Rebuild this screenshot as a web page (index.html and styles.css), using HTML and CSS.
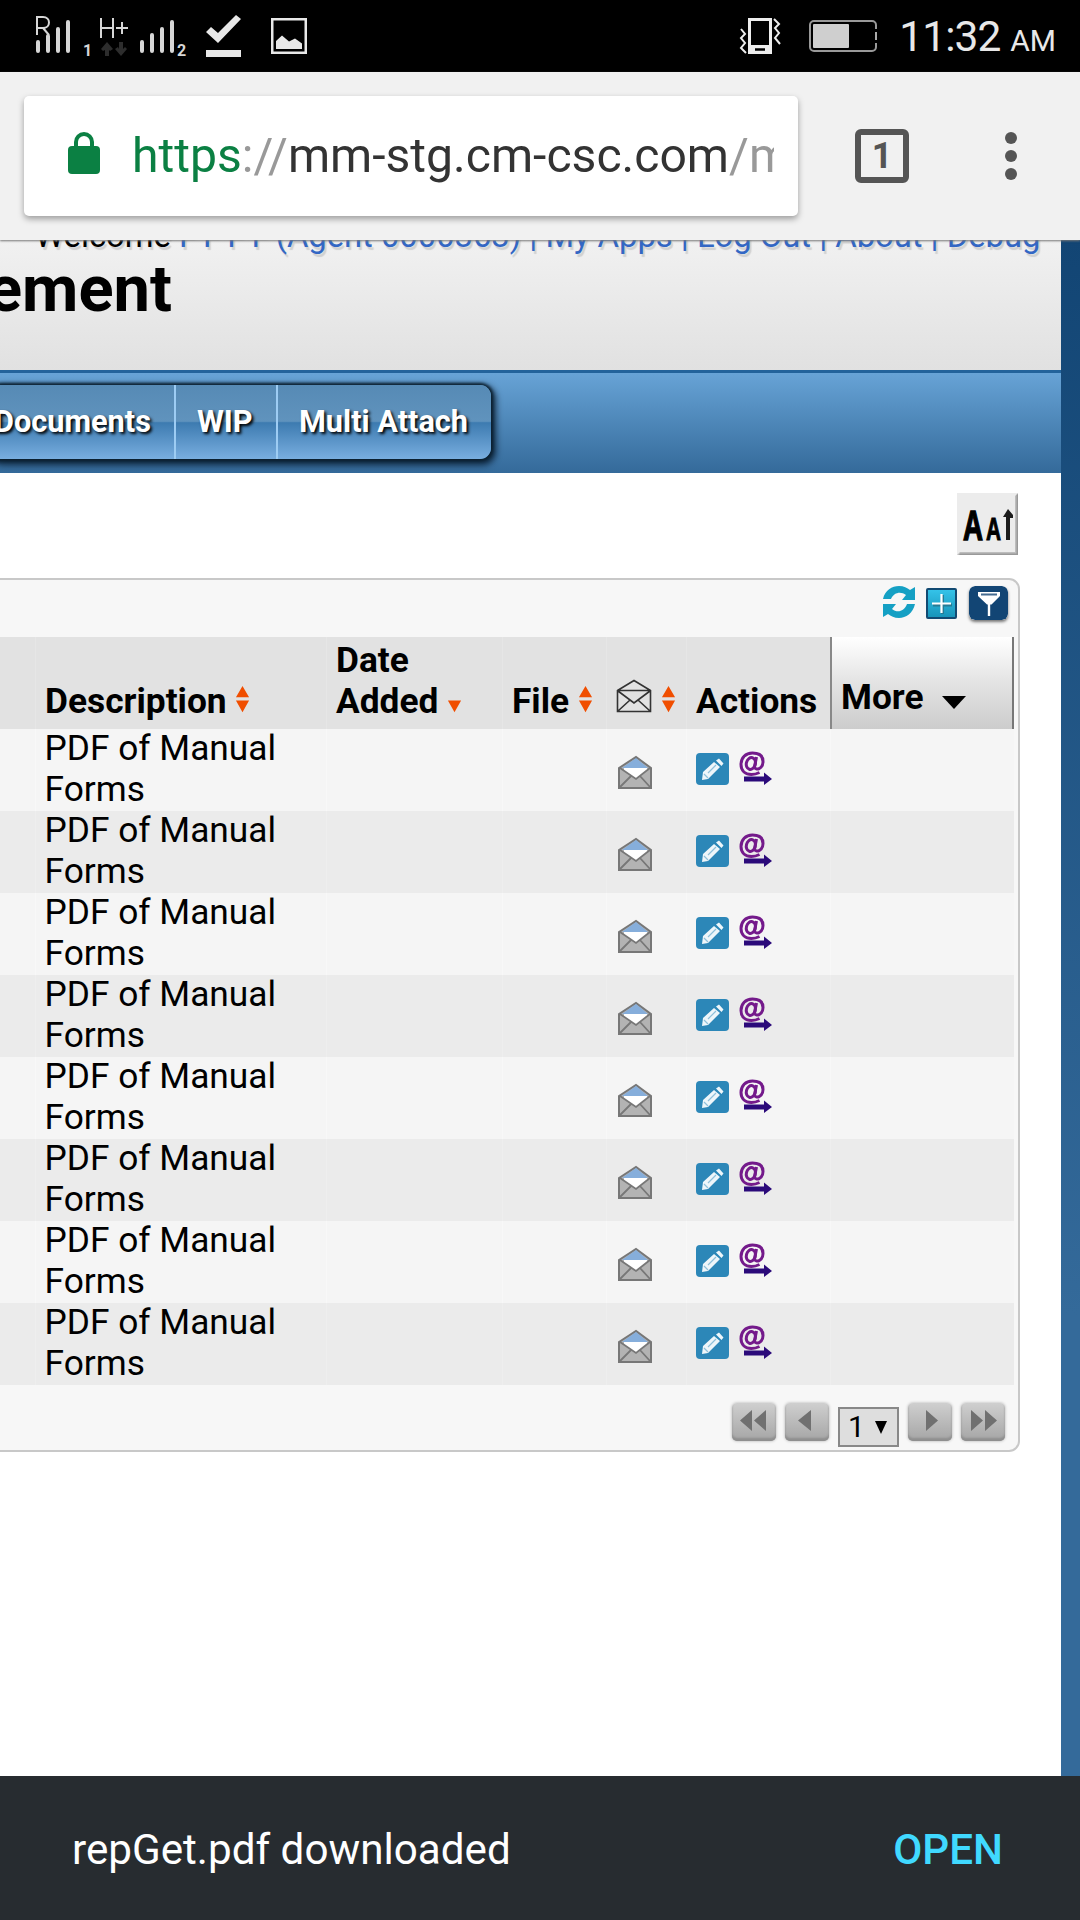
FILE: index.html
```html
<!DOCTYPE html>
<html lang="en">
<head>
<meta charset="utf-8">
<title>Documents</title>
<link rel="stylesheet" href="styles.css">
</head>
<body>
<svg class="defs" width="0" height="0" aria-hidden="true">
  <symbol id="sort" viewBox="0 0 16 28"><path fill="#f04e00" d="M8 0l7 12H1zM1 15.500h14L8 28z"/></symbol>
  <symbol id="env" viewBox="0 0 36 36">
    <path d="M2 13L19 2l15 11v20H2z" fill="#b3b3b3" stroke="#777" stroke-width="2"/>
    <path d="M5 13L19 3l12 10z" fill="#86aedb"/>
    <path d="M7 13h23v3L19 24 7 16z" fill="#fff"/>
    <path d="M3 13l16 11 14-11M3 32l11-11M33 32L23 21" fill="none" stroke="#777" stroke-width="1.800"/>
  </symbol>
  <symbol id="pencil" viewBox="0 0 33 32">
    <rect width="33" height="32" rx="4" fill="#2c87b8"/>
    <path d="M6 27l1-8L18 9l6 5-12 12zM20 7.500l3-2 4.500 5-2 2.500z" fill="#eef6fa"/>
    <path d="M12 20l8-8M8 21l4 4" stroke="#8fc0da" stroke-width="1.200"/>
  </symbol>
  <symbol id="mail" viewBox="0 0 34 36">
    <g fill="none" stroke="#741a8b" stroke-width="3">
      <ellipse cx="12" cy="12.500" rx="4.500" ry="6" transform="rotate(15 12 12)"/>
      <path d="M17.500 6l-2 10c1 4 8.500 2 8.500-5.500C24 4.500 19.500 2 13.500 2 6.500 2 2 7 2 13.500c0 6.500 4.500 10 10.500 10 3.500 0 6-1 8-2"/>
    </g>
    <path d="M5 25.500h20v-4l8 6.500-8 6v-3.500H5z" fill="#2b0a7a"/>
  </symbol>
</svg>

<header class="status">
  <svg width="260" height="72" viewBox="0 0 260 72">
    <g fill="none" stroke="#d6d6d6" stroke-width="4" stroke-linecap="round">
      <path d="M38 42v9M48 36v15M58 29v22M68 22v29M142 42v9M152 35v16M162 29v22M172 22v29"/>
    </g>
    <g fill="none" stroke="#d6d6d6" stroke-width="2">
      <path d="M37 35V17h6c8 0 8 11 0 11h-6m6 0l6 7M101 18v20M113 18v20M101 28h12M116 28h12M122 22v12"/>
    </g>
    <path d="M107 42l6 7-3 2-1-1v6h-4v-6l-2 1-2-2zM121 56l-6-7 3-2 1 2v-7h4v7l2-2 2 2z" fill="#2d2d2d"/>
    <path d="M206 32l5-5 7 6 18-18 5 4-23 24zM206 50h35v7h-35z" fill="#e8e8e8"/>
    <text class="sim" x="83" y="56">1</text><text class="sim" x="177" y="56">2</text>
  </svg>
  <svg class="picture" width="36" height="36" viewBox="0 0 36 36"><path d="M1.250 1.250h33.500v33.500H1.250z" fill="none" stroke="#e8e8e8" stroke-width="2.500"/><path d="M5 31v-8l6-5.500 7 6 6-3 7 5V31z" fill="#e8e8e8"/></svg>
  <span class="grow"></span>
  <svg width="160" height="72" viewBox="0 0 160 72">
    <path d="M29.500 19.500h21v30h-21z" fill="none" stroke="#eee" stroke-width="3"/><path d="M28 45h24v9H28z" fill="#eee"/><path d="M35 49.500h10" stroke="#000" stroke-width="2.500"/>
    <path d="M21 29l4 5-4 4 4 5-4 5 5 5M54 19l5 5-4 4 4 5-4 5 5 6" fill="none" stroke="#eee" stroke-width="2"/>
    <rect x="90" y="21" width="66" height="30" rx="4" fill="none" stroke="#999" stroke-width="2"/><path d="M156 29v14" stroke="#000" stroke-width="4"/><path d="M156 32v8" stroke="#aaa" stroke-width="2"/>
    <rect x="93" y="24" width="36" height="24" rx="1" fill="#cfcfcf"/>
  </svg>
  <span class="clock">11:32 <small>AM</small></span>
</header>

<div class="toolbar">
  <div class="omnibox">
    <svg width="32" height="42" viewBox="0 0 32 42"><rect y="14" width="32" height="28" rx="4" fill="#0b8043"/><path d="M8 15v-5a8 8 0 0 1 16 0v5" fill="none" stroke="#0b8043" stroke-width="4"/></svg>
    <div class="url"><b>https</b><i>://</i>mm-stg.cm-csc.com<i>/m</i></div>
  </div>
  <div class="tabs">1</div>
  <div class="menu"><span></span><span></span><span></span></div>
</div>

<div class="viewport">
  <main class="page">
    <div class="banner">
      <div class="welcome">Welcome <a><span class="user">P P P P </span>(Agent 0000363) | My Apps | Log Out | About | Debug</a></div>
      <h1>ement</h1>
    </div>
    <nav class="nav">
      <div class="pill"><a class="docs">Documents</a><a class="wip">WIP</a><a class="multi">Multi Attach</a></div>
    </nav>
    <div class="sizer">
      <svg width="61" height="62" viewBox="0 0 61 62"><path d="M0 0h61v62H0z" fill="#ececec"/><path d="M61 0v62H0l3-3h55V3z" fill="#bdbdbd"/><path d="M61 1v61H2l1-1.500h56.500V2z" fill="#999"/>
        <text class="big-a" x="6" y="47" textLength="20" lengthAdjust="spacingAndGlyphs">A</text><text class="small-a" x="29" y="47" textLength="15" lengthAdjust="spacingAndGlyphs">A</text>
        <path d="M49 47V24h-3l5-8 5 6v3h-3v22z" fill="#1c1c1c"/></svg>
    </div>
    <section class="panel">
      <div class="tools">
        <svg width="32" height="32" viewBox="0 0 32 32"><g fill="#15a0c4"><path d="M0 13C2 4 9 0 16 0c5 0 8 2 11 4l5-3v13H19l4-5c-5-4-12-3-15 4z"/><path d="M32 18c-2 9-9 14-16 14-5 0-8-2-11-4l-5 3V18h13l-4 5c5 4 12 3 15-5z"/></g></svg>
        <svg width="31" height="31" viewBox="0 0 31 31"><defs><linearGradient id="pg" x2="0" y2="1"><stop stop-color="#35c4ea"/><stop offset="1" stop-color="#1793b8"/></linearGradient></defs><rect x="1" y="1" width="29" height="29" rx="1" fill="url(#pg)" stroke="#124a72" stroke-width="2"/><path d="M16.500 7v19M7 17h19" stroke="#267b94" stroke-width="3"/><path d="M15.500 6v19M6 15.500h19" stroke="#fff" stroke-width="2.200"/></svg>
        <svg class="filter" width="39" height="34" viewBox="0 0 39 34"><rect width="39" height="34" rx="6" fill="#124574"/><path d="M9 6h22v4l-8.500 8.500H18L9 10zM18.800 17h2.400v13h-2.400z" fill="#fff"/><path d="M12 8.500h16" stroke="#456b90" stroke-width="2"/></svg>
      </div>
      <table class="grid">
        <colgroup><col class="c0"><col class="c1"><col class="c2"><col class="c3"><col class="c4"><col class="c5"><col class="c6"></colgroup>
        <thead><tr>
          <th></th>
          <th>Description <svg class="sort" width="15" height="28"><use href="#sort"/></svg></th>
          <th>Date<br>Added <svg class="sort" width="15" height="28" viewBox="0 0 16 28"><path d="M1 15.500h14L8 28z" fill="#f04e00"/></svg></th>
          <th>File <svg class="sort" width="15" height="28"><use href="#sort"/></svg></th>
          <th><svg class="henv" width="36" height="34" viewBox="0 0 36 34"><path d="M1.500 11.500L18 1.500l16.500 10v21h-33zM1.500 11.500h33M2 12l16 12 16-12M2 32l12-11M34 32L22 21" fill="none" stroke="#333" stroke-width="1.600"/></svg><svg class="sort s2" width="15" height="28"><use href="#sort"/></svg></th>
          <th>Actions</th>
          <th class="more">More <svg width="24" height="13" viewBox="0 0 24 13"><path d="M0 0h24L12 13z"/></svg></th>
        </tr></thead>
        <tbody id="rows"></tbody>
      </table>
      <div class="pager">
        <span class="pb"><svg width="44" height="38" viewBox="0 0 44 38"><path d="M20 7v21L8 17.500zM34 7v21L22 17.500z"/></svg></span>
        <span class="pb"><svg width="44" height="38" viewBox="0 0 44 38"><path d="M26 7v21L13 17.500z"/></svg></span>
        <span class="select">1 <svg width="12" height="13" viewBox="0 0 12 13"><path d="M0 0h12L6 13z"/></svg></span>
        <span class="pb"><svg width="44" height="38" viewBox="0 0 44 38"><path d="M18 7v21l12-10.500z"/></svg></span>
        <span class="pb"><svg width="44" height="38" viewBox="0 0 44 38"><path d="M10 7v21l12-10.500zM24 7v21l12-10.500z"/></svg></span>
      </div>
    </section>
  </main>
</div>

<footer class="snack"><span>repGet.pdf downloaded</span><a>OPEN</a></footer>
<script src="rows.js"></script>
</body>
</html>
```
FILE: rows.js
```js
const row = `<tr><td></td><td><div class="desc">PDF of Manual Forms</div></td><td></td><td></td>
<td class="e"><svg width="36" height="36"><use href="#env"/></svg></td>
<td class="a"><div><svg width="33" height="32"><use href="#pencil"/></svg><svg width="34" height="36"><use href="#mail"/></svg></div></td><td></td></tr>`;
document.getElementById('rows').innerHTML = row.repeat(8);
```
FILE: styles.css
```css
* { box-sizing: border-box; }
body { margin: 0; width: 1080px; height: 1920px; overflow: hidden; display: flex; flex-direction: column; font-family: Roboto, sans-serif; background: #fff; color: #000; }
svg { display: block; flex: none; }
.defs { position: absolute; }
.grow { flex: 1; }

.status { height: 72px; background: #000; color: #e8e8e8; display: flex; align-items: center; padding-right: 24px; flex: none; }
.picture { margin-left: 11px; }
.sim { font: bold 16px Roboto, sans-serif; fill: #d6d6d6; }
.clock { width: 176px; text-align: right; white-space: nowrap; font-size: 42.5px; line-height: 72px; padding-top: 6px; letter-spacing: -0.9px; }
.clock small { font-size: 30px; letter-spacing: 0; }

.toolbar { height: 168px; flex: none; background: #f1f1f1; display: flex; align-items: center; padding: 0 63px 12px 24px; box-shadow: 0 1px 2px #777; position: relative; z-index: 1; }
.omnibox { width: 774px; height: 120px; margin-top: 12px; background: #fff; border-radius: 5px; box-shadow: 0 3px 6px rgba(0,0,0,.35); display: flex; align-items: center; padding: 0 24px 0 44px; gap: 32px; }
.omnibox svg { margin-bottom: 6px; }
.url { flex: 1; overflow: hidden; white-space: nowrap; font-size: 48.1px; line-height: 70px; color: #333; margin-top: -1px; }
.url b { font-weight: 400; color: #0b8043; }
.url i { font-style: normal; color: #999; }
.tabs { margin: 12px 0 0 57px; width: 54px; height: 54px; border: 6px solid #555; border-radius: 6px; font: bold 36px/43px Roboto, sans-serif; color: #555; text-align: center; }
.menu { margin: 12px 0 0 auto; display: grid; gap: 6px; }
.menu span { width: 12px; height: 12px; border-radius: 50%; background: #555; }

.viewport { flex: 1; min-height: 0; background: linear-gradient(#124574, #346a9a 70%); overflow: hidden; }
.page { width: 1061px; height: 100%; background: #fff; }
.banner { height: 130px; overflow: hidden; background: linear-gradient(#f1f1f1, #e1e1e1); }
.welcome { margin: -18px 0 0 35px; height: 28px; line-height: 28px; font-size: 32.75px; white-space: nowrap; text-shadow: 2px 3px 1px rgba(0,0,0,.13); }
.welcome a { color: #3367c4; }
.user { letter-spacing: -2.3px; }
h1 { margin: 8px 0 0 -13px; font-size: 65px; line-height: 62px; }
.nav { height: 103px; border-top: 3px solid #23639b; background: linear-gradient(#67a3d6, #346a9a); padding-top: 12px; overflow: hidden; }
.pill { width: 501px; height: 74px; margin-left: -10px; border-radius: 11px; background: linear-gradient(#568ab5, #6093bd 49%, #3d7bb0 51%, #79aee0); box-shadow: 0 0 3px 2px #0b2030, 2px 3px 6px 3px rgba(0,15,30,.75); display: flex; color: #fff; font: bold 30.7px/73px Roboto, sans-serif; text-shadow: 2px 2px 3px #000; }
.pill a { border-right: 2px solid #9dccf3; white-space: nowrap; }
.docs { width: 186px; padding-left: 4px; }
.wip { width: 102px; padding-left: 21px; }
.pill .multi { border: 0; padding-left: 21px; }

.sizer { height: 105px; padding: 20px 43px 0 0; display: flex; justify-content: flex-end; }
.big-a { font: bold 43px "Liberation Sans", sans-serif; stroke: #000; stroke-width: 1.5px; }
.small-a { font: bold 32px "Liberation Sans", sans-serif; stroke: #000; stroke-width: 1px; }
.panel { margin-left: -10px; width: 1030px; height: 874px; border: 2px solid #c8c8c8; border-radius: 11px; background: #f7f7f7; padding-right: 4px; }
.tools { height: 57px; display: flex; justify-content: flex-end; padding: 6px 6px 0 0; }
.tools svg:nth-child(2) { margin: 2px 12px 0 11px; }
.filter { border-radius: 6px; box-shadow: 0 2px 3px #777; }
.grid { table-layout: fixed; width: 1022px; border-collapse: separate; border-spacing: 0; font-size: 35.3px; line-height: 41px; }
.c0 { width: 43px; } .c1 { width: 291px; } .c2 { width: 176px; } .c3 { width: 104px; } .c4 { width: 80px; } .c5 { width: 144px; } .c6 { width: 184px; }
th { height: 92px; padding: 0 0 7px 9px; text-align: left; vertical-align: bottom; background: #e2e2e2; border-left: 1px solid #e6e6e6; white-space: nowrap; font-size: 35.3px; }
th svg { display: inline-block; }
.sort { vertical-align: 0; }
.henv { vertical-align: 0; }
.s2 { margin-left: 9px; }
th.more { border-left: 2px solid #888; border-right: 2px solid #777; background: linear-gradient(#fff, #e3e3e3 50%, #ccc); padding-bottom: 11px; }
.more svg { margin-left: 10px; }
td { height: 82px; padding: 0 40px 0 9px; vertical-align: top; border-left: 1px solid #f8f8f8; background: #f5f5f5; }
.desc { margin: -1px 0 0 -0.5px; }
tr:nth-child(even) td { background: #ebebeb; border-left-color: #eee; }
td.e { padding: 26px 0 0 10px; }
td.a { padding: 22px 0 0 9px; }
td.a div { display: flex; gap: 10px; }
td.a svg:first-child { margin-top: 2px; }
.pager { display: flex; justify-content: flex-end; padding: 18px 9px 0 0; gap: 9px; }
.pb { width: 44px; height: 38px; border-radius: 5px; background: linear-gradient(#cfcfcf, #a5a5a5); box-shadow: inset 0 -3px 2px #8f8f8f, 0 0 3px #aaa; }
.pb svg { fill: #707070; }
.select { width: 61px; height: 40px; margin-top: 4px; border: 2px solid #888; background: #dedede; font-size: 30px; line-height: 34px; display: flex; align-items: center; padding-left: 8px; gap: 10px; }

.snack { height: 144px; flex: none; background: #272c30; display: flex; justify-content: space-between; align-items: center; padding: 3px 77px 0 72px; font-size: 42.2px; color: #fff; }
.snack a { color: #40d9ff; font-weight: 500; }
```
